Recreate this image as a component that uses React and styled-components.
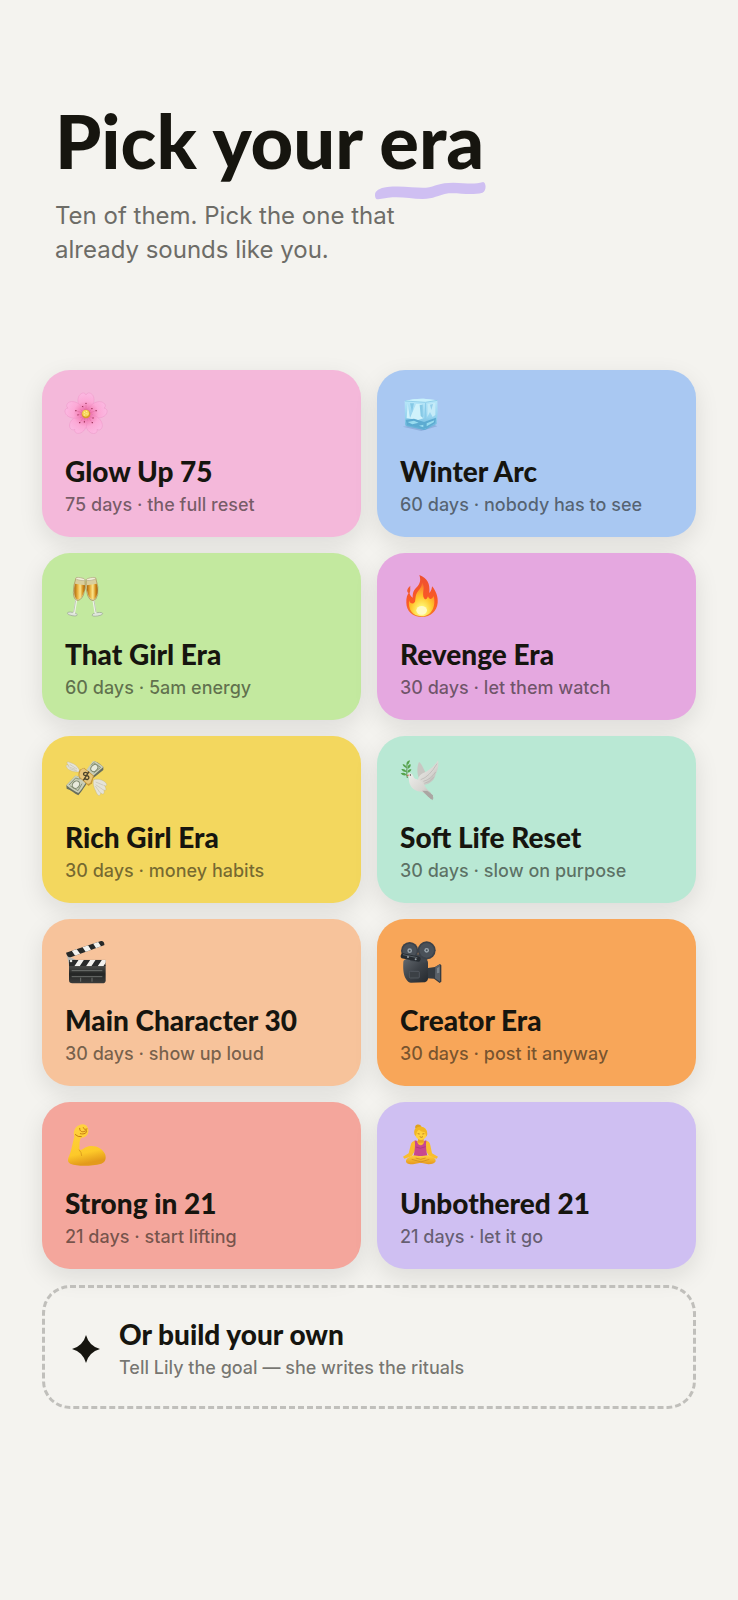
import React, { useState } from "react";
import styled, { createGlobalStyle } from "styled-components";

const GlobalStyle = createGlobalStyle`
	* {
		box-sizing: border-box;
	}

	body {
		margin: 0;
		background: #f4f3ef;
		color: #16150f;
		font-family: Inter, "Open Sans", sans-serif;
	}
`;

const Page = styled.main`
	min-height: 100vh;
	padding: 101px 42px 96px;
`;

const Header = styled.header`
	padding: 0 13px;
	margin-bottom: 103px;
`;

const Heading = styled.h1`
	margin: 0;
	font-family: Lato, sans-serif;
	font-size: 74px;
	font-weight: 900;
	line-height: 80px;
`;

const Underlined = styled.span`
	position: relative;
	display: inline-block;
`;

const Squiggle = styled.svg`
	position: absolute;
	left: -4px;
	bottom: -19px;
	width: calc(100% + 6px);
	height: 18px;
`;

const Intro = styled.p`
	max-width: 400px;
	margin: 18px 0 0;
	color: #6d6c67;
	font-size: 24px;
	line-height: 34px;
`;

const Grid = styled.section`
	display: grid;
	grid-template-columns: 1fr 1fr;
	gap: 16px;
`;

const Card = styled.button`
	display: flex;
	flex-direction: column;
	align-items: flex-start;
	padding: 22px 23px 20px;
	border: 0;
	border-radius: 28px;
	background: ${props => props.$color};
	box-shadow: 0 8px 24px rgba(22, 21, 15, 0.1);
	color: inherit;
	font-family: inherit;
	text-align: left;
	cursor: pointer;
`;

const Icon = styled.svg`
	width: 43px;
	height: 43px;
	margin-bottom: 20px;
	overflow: visible;
`;

const Title = styled.span`
	display: block;
	font-family: Lato, sans-serif;
	font-size: 28px;
	font-weight: 900;
	line-height: 32px;
`;

const Detail = styled.span`
	display: block;
	margin-top: 6px;
	color: rgba(22, 21, 15, 0.58);
	font-size: 18px;
	font-weight: 500;
	line-height: 24px;
`;

const CustomCard = styled.button`
	grid-column: 1 / -1;
	display: flex;
	align-items: center;
	gap: 19px;
	padding: 30px 27px 26px;
	border: 3px dashed #c0bfbb;
	border-radius: 28px;
	background: transparent;
	color: inherit;
	font-family: inherit;
	text-align: left;
	cursor: pointer;
`;

const Star = styled.svg`
	width: 28px;
	height: 28px;
	flex: none;
`;

const Blossom = () => (
	<>
		<defs>
			<radialGradient id="petal" cx="63" cy="66" r="64" gradientUnits="userSpaceOnUse">
				<stop offset="0" stopColor="#e0558f" />
				<stop offset="0.3" stopColor="#f483b8" />
				<stop offset="0.6" stopColor="#fca9d6" />
				<stop offset="1" stopColor="#fbb9e2" />
			</radialGradient>
		</defs>
		{[0, 72, 144, 216, 288].map(angle => (
			<g key={angle} transform={`rotate(${angle} 63 66)`}>
				<path
					d="M63 66C46 53 37 38 39 21C41 9 49 2 57 3Q61 4 63 9Q65 4 70 3C79 2 86 10 87 22C88 38 79 53 63 66Z"
					fill="url(#petal)"
					stroke="#ea8abf"
					strokeWidth="1"
				/>
				<path d="M63 60V38M63 60L55 47M63 60L71 47" stroke="#d95f98" strokeWidth="1" />
				<circle cx="63" cy="34" r="2" fill="#8d2447" />
				<circle cx="53" cy="44" r="2" fill="#8d2447" />
			</g>
		))}
		<circle cx="63" cy="66" r="13" fill="#d99b2b" />
		<circle cx="62" cy="64" r="10" fill="#f7d65b" />
		<path d="M57 61h3M63 58h3M62 65h3M57 69h3M67 66h3" stroke="#fff2a0" strokeWidth="3" />
	</>
);

const IceCube = () => (
	<>
		<defs>
			<linearGradient id="ice" x1="0" y1="0" x2="0" y2="1">
				<stop offset="0" stopColor="#bdeafa" />
				<stop offset="0.6" stopColor="#94d2ee" />
				<stop offset="1" stopColor="#5aaad2" />
			</linearGradient>
		</defs>
		<path d="M8 104L64 117L112 103L92 94Z" fill="#8fb0de" />
		<path d="M14 27Q42 19 70 20L112 25Q115 61 110 96L76 113L72 114L20 103Q15 101 15 95Z" fill="url(#ice)" />
		<path d="M14 27Q46 19 72 20L112 25L76 30Z" fill="#c9f1fb" />
		<path d="M15 27L76 31L112 25" fill="none" stroke="#7dc3e2" strokeWidth="2" />
		<path d="M77 33L75 111" stroke="#8accea" strokeWidth="3" />
		<path d="M23 35L30 78L48 36L65 36L70 79L54 84L20 78Z" fill="#d0f2fb" />
		<path d="M30 34L36 60L42 34ZM59 38L62 72L69 78L68 38Z" fill="#86c9e6" />
		<path d="M83 36L106 32L106 69L98 75L90 60L82 75Z" fill="#c5ebf8" />
		<path d="M90 38L99 36L94 54Z" fill="#94cfeb" />
		<path d="M17 83L42 80L72 90L108 77L106 93L75 110L21 100Z" fill="#5cabd1" />
		<path d="M23 90L42 86L56 92L37 97ZM80 94L103 85L101 91L80 103ZM57 101L70 98L70 106Z" fill="#98dcef" />
	</>
);

const Glasses = () => (
	<>
		<defs>
			<linearGradient id="wine" x1="0" y1="0" x2="1" y2="0">
				<stop offset="0" stopColor="#a96509" />
				<stop offset="0.3" stopColor="#e9ae3c" />
				<stop offset="0.55" stopColor="#fbe58c" />
				<stop offset="0.8" stopColor="#d58f1d" />
				<stop offset="1" stopColor="#9c5a08" />
			</linearGradient>
		</defs>
		<ellipse cx="22" cy="117" rx="15" ry="5" fill="#dfe6dc" stroke="#99a592" strokeWidth="2" transform="rotate(10 22 117)" />
		<path d="M34 72L27 116" stroke="#f1f4ec" strokeWidth="6" />
		<path d="M32 76L26 112" stroke="#a7b29d" strokeWidth="2" />
		<path d="M33 9L60 14Q64 39 55 61Q46 78 36 76Q26 73 25 53Q25 29 33 9Z" fill="#d9cf9e" stroke="#a68c56" strokeWidth="2" />
		<path d="M30 26L60 31Q61 46 53 60Q45 75 37 73Q29 71 28 53Q27 39 30 26Z" fill="url(#wine)" />
		<ellipse cx="46" cy="12" rx="14" ry="4" fill="#f0eed7" stroke="#b7ab8a" strokeWidth="2" transform="rotate(9 46 12)" />
		<ellipse cx="97" cy="118" rx="16" ry="5" fill="#dfe6dc" stroke="#99a592" strokeWidth="2" transform="rotate(-8 97 118)" />
		<path d="M85 73L92 116" stroke="#f1f4ec" strokeWidth="6" />
		<path d="M87 77L93 112" stroke="#a7b29d" strokeWidth="2" />
		<path d="M64 14L92 9Q102 36 98 59Q94 76 84 77Q74 77 68 62Q60 39 64 14Z" fill="#d9cf9e" stroke="#a68c56" strokeWidth="2" />
		<path d="M66 31L95 26Q101 47 95 62Q91 73 83 73Q75 72 70 61Q64 46 66 31Z" fill="url(#wine)" />
		<ellipse cx="78" cy="12" rx="14" ry="4" fill="#f0eed7" stroke="#b7ab8a" strokeWidth="2" transform="rotate(-9 78 12)" />
	</>
);

const Flame = () => (
	<>
		<defs>
			<linearGradient id="flame" x1="0" y1="0" x2="0" y2="1">
				<stop offset="0" stopColor="#ee5030" />
				<stop offset="0.65" stopColor="#fb5a25" />
				<stop offset="1" stopColor="#f67c24" />
			</linearGradient>
			<radialGradient id="glow" cx="0.5" cy="0.85" r="0.85">
				<stop offset="0" stopColor="#fffbc8" />
				<stop offset="0.2" stopColor="#fff06a" />
				<stop offset="0.5" stopColor="#ffc72d" />
				<stop offset="0.8" stopColor="#fd8c2c" />
				<stop offset="1" stopColor="#f65f2b" />
			</radialGradient>
		</defs>
		<path d="M58 0C81 9 91 25 88 54C94 48 96 40 96 34C107 46 115 66 113 83C111 108 91 126 66 126C38 126 19 108 19 83C18 68 22 58 28 51C29 60 33 65 38 68C38 51 42 45 50 37C61 26 63 14 58 0Z" fill="url(#flame)" />
		<path d="M31 32C30 43 33 50 27 55C19 50 20 42 31 32Z" fill="#f15b32" />
		<path d="M66 22C76 38 67 48 70 65C74 75 80 76 84 64C89 77 97 72 101 63C108 88 99 123 65 124C36 123 24 103 27 76C31 87 39 89 45 80C47 70 46 61 51 53C58 43 66 37 66 22Z" fill="url(#glow)" />
		<ellipse cx="65" cy="106" rx="16" ry="13" fill="#fffac4" />
	</>
);

const Money = () => (
	<>
		<path d="M40 42C30 42 10 39 4 26C1 21 7 19 12 23C3 15 5 10 12 12C20 16 36 18 44 38Z" fill="#e5e3d8" stroke="#b6aa7c" strokeWidth="1" />
		<path d="M8 25L31 34M14 19L36 33M14 32L36 39" stroke="#c3bfb1" strokeWidth="2" />
		<path d="M86 65C103 61 121 68 125 79C126 84 121 85 118 82C127 95 122 101 116 95C121 108 113 112 107 104C106 119 96 112 92 99C88 90 82 78 86 65Z" fill="#e5e3d8" stroke="#b6aa7c" strokeWidth="1" />
		<path d="M92 72L116 82M92 80L114 95M91 84L105 104" stroke="#c3bfb1" strokeWidth="2" />
		<path d="M4 82L32 53C48 66 61 39 86 12C91 7 103 16 115 27V36L84 61C64 70 56 96 40 112C28 106 18 96 5 92Z" fill="#686f5d" />
		<path d="M4 82L32 52C49 66 63 36 84 9C91 9 104 18 115 27L84 54C64 64 56 90 40 105C28 101 18 92 4 82Z" fill="#c9ceb9" />
		<path d="M12 81L32 60Q48 69 60 50M78 22L86 14L107 28L86 45M16 84L39 98L51 77" fill="none" stroke="#8a9578" strokeWidth="3" />
		<ellipse cx="33" cy="80" rx="10" ry="12" fill="#e8eadb" stroke="#7d886c" strokeWidth="3" transform="rotate(42 33 80)" />
		<ellipse cx="88" cy="30" rx="9" ry="12" fill="#e8eadb" stroke="#7d886c" strokeWidth="3" transform="rotate(42 88 30)" />
		<path d="M44 35L57 29L87 53L81 76L71 84L42 58Q38 48 44 35Z" fill="#c69639" />
		<path d="M47 36L56 31L84 54L76 75L69 78L44 57Q42 47 47 36Z" fill="#e8c77c" />
		<path d="M69 48C62 39 52 45 57 51C62 55 68 50 71 56C74 64 65 68 58 60M72 41L55 67" fill="none" stroke="#4b4229" strokeWidth="4" />
	</>
);

const Dove = () => (
	<>
		<defs>
			<linearGradient id="feather" x1="0" y1="0" x2="1" y2="1">
				<stop offset="0" stopColor="#eeeeeb" />
				<stop offset="0.6" stopColor="#d7d5d1" />
				<stop offset="1" stopColor="#a9a6a3" />
			</linearGradient>
		</defs>
		<path d="M57 60C50 44 51 26 57 12C65 17 69 30 76 42L80 65Z" fill="#c8c6c2" />
		<path d="M53 70C56 47 67 48 82 39C95 31 106 20 114 7C118 23 111 40 107 48C103 66 93 76 73 81Z" fill="url(#feather)" />
		<path d="M62 65Q88 57 111 17M70 70Q93 64 107 42M73 76Q90 73 101 57" fill="none" stroke="#b7b4b0" strokeWidth="2" />
		<path d="M22 49C27 42 38 46 40 55C42 65 52 62 67 73C76 83 77 93 91 103L101 121L93 124L80 111L66 101C45 101 29 88 27 69C27 61 29 57 22 54Z" fill="url(#feather)" />
		<path d="M67 98L82 99L99 112L98 127L83 115Z" fill="#aaa6a2" />
		<path d="M17 53L26 49L26 55Z" fill="#d5776a" />
		<circle cx="31" cy="51" r="2" fill="#35352f" />
		<path d="M22 60C19 49 21 37 21 20" fill="none" stroke="#55924b" strokeWidth="3" />
		<path d="M20 42Q8 43 4 33Q16 31 20 42ZM21 31Q9 27 8 18Q19 20 21 31ZM20 22Q17 9 30 7Q29 17 20 22ZM23 32Q22 20 32 19Q33 29 23 32ZM22 44Q24 32 34 34Q33 43 22 44ZM20 51Q7 55 2 46Q14 41 20 51Z" fill="#55a34c" />
	</>
);

const Clapper = () => (
	<>
		<defs>
			<clipPath id="clap-top"><path d="M3 35L108 0Q117 -1 119 12L17 49Q7 50 3 35Z" /></clipPath>
			<clipPath id="clap-bar"><path d="M12 56H122V76H12Z" /></clipPath>
			<linearGradient id="slate" x1="0" y1="0" x2="0" y2="1">
				<stop offset="0" stopColor="#50514f" />
				<stop offset="0.5" stopColor="#242625" />
				<stop offset="1" stopColor="#3b3c3b" />
			</linearGradient>
		</defs>
		<path d="M5 40L14 48L34 57L30 71L12 72Z" fill="#b9bab6" />
		<g clipPath="url(#clap-top)">
			<path d="M0 -4H130V60H0Z" fill="#272929" />
			<path d="M17 25L32 20L51 46L35 51ZM48 12L65 6L82 33L66 38ZM80 1L95 -4L112 22L98 29Z" fill="#f2f1ed" />
		</g>
		<path d="M12 71H122V119Q121 127 112 127H22Q12 127 12 117Z" fill="url(#slate)" />
		<g clipPath="url(#clap-bar)">
			<path d="M10 56H122V76H10Z" fill="#292b2b" />
			<path d="M28 76L41 56H57L44 76ZM63 76L76 56H92L79 76ZM98 76L111 56H128L115 76Z" fill="#f2f1ed" />
		</g>
		<circle cx="18" cy="60" r="4" fill="#e2e4df" />
		<path d="M20 89H112M20 107H112M47 110V122M81 110V122" stroke="#8d908d" strokeWidth="2" />
	</>
);

const MovieCamera = () => (
	<>
		<defs>
			<linearGradient id="body" x1="0" y1="0" x2="1" y2="1">
				<stop offset="0" stopColor="#62686e" />
				<stop offset="0.5" stopColor="#3d4248" />
				<stop offset="1" stopColor="#24292e" />
			</linearGradient>
		</defs>
		<path d="M79 82L105 78L120 69L124 73V122L119 126L102 113L80 112Z" fill="#353b41" />
		<path d="M106 77L120 70V122L105 112Z" fill="#596068" />
		<path d="M111 82L118 77V95L111 97Z" fill="#7c858c" />
		<path d="M10 62Q11 54 25 53L75 54Q84 56 84 66V114Q82 123 75 124L33 125Q24 125 18 114C9 100 9 79 10 62Z" fill="url(#body)" />
		<rect x="28" y="91" width="30" height="20" rx="3" fill="#3b4045" stroke="#5d646b" strokeWidth="2" />
		<path d="M28 40H82V55L75 65L31 60Z" fill="#41474e" />
		<circle cx="29" cy="29" r="26" fill="#3c424a" />
		<circle cx="80" cy="28" r="27" fill="#3c424a" />
		<circle cx="29" cy="29" r="21" fill="#4a5159" />
		<circle cx="80" cy="28" r="22" fill="#4a5159" />
		<circle cx="29" cy="29" r="7" fill="#9ba5ac" />
		<circle cx="80" cy="28" r="7" fill="#9ba5ac" />
		<circle cx="29" cy="29" r="3" fill="#474e55" />
		<circle cx="80" cy="28" r="3" fill="#474e55" />
		<path d="M10 45L54 54" stroke="#272c31" strokeWidth="16" strokeLinecap="round" />
		<path d="M9 41L52 50" stroke="#767f86" strokeWidth="2" />
		<circle cx="24" cy="48" r="3" fill="#99a2a8" />
		<circle cx="47" cy="55" r="3" fill="#99a2a8" />
	</>
);

const Muscle = () => (
	<>
		<defs>
			<linearGradient id="skin" x1="0" y1="0" x2="0.2" y2="1">
				<stop offset="0" stopColor="#ffd343" />
				<stop offset="0.75" stopColor="#fdc929" />
				<stop offset="1" stopColor="#e39a1b" />
			</linearGradient>
		</defs>
		<path d="M28 38C23 24 30 8 42 4C50 -1 63 -1 67 9C76 24 66 42 48 41C42 51 44 64 43 76C50 83 55 70 71 67C92 63 112 73 120 90C125 103 121 115 109 119C76 127 38 127 16 119C7 115 8 106 12 97C21 75 22 58 28 38Z" fill="url(#skin)" />
		<path d="M44 13C43 23 54 27 64 19C67 27 57 32 46 29M55 11Q57 19 66 15M31 32Q39 40 49 38" fill="none" stroke="#c77e12" strokeWidth="3" strokeLinecap="round" />
		<path d="M42 77Q50 85 50 96" fill="none" stroke="#dfa01e" strokeWidth="3" />
	</>
);

const Yoga = () => (
	<>
		<defs>
			<linearGradient id="legs" x1="0" y1="0" x2="0" y2="1">
				<stop offset="0" stopColor="#ffd23c" />
				<stop offset="1" stopColor="#e6981f" />
			</linearGradient>
		</defs>
		<path d="M46 50H78Q89 51 91 64L96 88L114 98L110 104L88 98L76 77H47L35 97L13 104L9 98L26 88L32 64Q34 51 46 50Z" fill="#f9be2e" />
		<path d="M54 40H71V56H54Z" fill="#e9a422" />
		<path d="M44 49Q47 68 41 96H82Q76 69 79 49L73 51Q70 64 62 64Q54 64 51 51Z" fill="#c8488f" />
		<path d="M47 69Q61 77 77 68" fill="none" stroke="#a7307a" strokeWidth="2" />
		<path d="M40 94Q61 99 83 94C99 98 108 104 107 112Q103 121 85 121L62 116L39 121Q20 121 18 113C17 105 27 98 40 94Z" fill="url(#legs)" />
		<path d="M35 106L64 114M88 106L62 114M47 102Q62 110 77 102" fill="none" stroke="#c98420" strokeWidth="2" />
		<path d="M46 13C43 3 53 -1 61 3L66 11L50 15Z" fill="#dfa11c" />
		<ellipse cx="63" cy="28" rx="18" ry="20" fill="#ffd13c" />
		<path d="M44 33C40 19 45 12 54 9C67 5 82 12 82 31L79 38L75 25Q63 23 57 17Q50 20 48 36Z" fill="#f1b624" />
		<path d="M53 29L59 30M67 30L73 29M59 38Q64 42 69 38" fill="none" stroke="#a55e18" strokeWidth="2" />
	</>
);

const eras = [
	{ title: "Glow Up 75", detail: "75 days · the full reset", color: "#f4b8da", Art: Blossom },
	{ title: "Winter Arc", detail: "60 days · nobody has to see", color: "#a9c8f2", Art: IceCube },
	{ title: "That Girl Era", detail: "60 days · 5am energy", color: "#c3e99f", Art: Glasses },
	{ title: "Revenge Era", detail: "30 days · let them watch", color: "#e5a8e0", Art: Flame },
	{ title: "Rich Girl Era", detail: "30 days · money habits", color: "#f3d75e", Art: Money },
	{ title: "Soft Life Reset", detail: "30 days · slow on purpose", color: "#b9e8d4", Art: Dove },
	{ title: "Main Character 30", detail: "30 days · show up loud", color: "#f7c39b", Art: Clapper },
	{ title: "Creator Era", detail: "30 days · post it anyway", color: "#f8a659", Art: MovieCamera },
	{ title: "Strong in 21", detail: "21 days · start lifting", color: "#f4a69c", Art: Muscle },
	{ title: "Unbothered 21", detail: "21 days · let it go", color: "#cfbff2", Art: Yoga }
];

const App = () => {
	const [selected, setSelected] = useState(null);

	return (
		<>
			<GlobalStyle />
			<Page>
				<Header>
					<Heading>
						Pick your{" "}
						<Underlined>
							era
							<Squiggle viewBox="0 0 344 54" preserveAspectRatio="none" aria-hidden="true">
								<path
									d="M0 38C0 27 13 18 38 15C88 10 128 19 158 17C188 13 198 2 243 2C278 2 303 9 335 0C344 0 347 26 333 32C298 41 263 32 228 34C193 40 183 51 148 51C98 49 68 39 10 52C2 53 0 45 0 38Z"
									fill="#cfbff2"
								/>
							</Squiggle>
						</Underlined>
					</Heading>
					<Intro>
						Ten of them. Pick the one that
						<br />
						already sounds like you.
					</Intro>
				</Header>

				<Grid>
					{eras.map(({ title, detail, color, Art }) => (
						<Card
							key={title}
							type="button"
							$color={color}
							aria-pressed={selected === title}
							onClick={() => setSelected(title)}
						>
							<Icon viewBox="0 0 129 129" fill="none" aria-hidden="true">
								<Art />
							</Icon>
							<Title>{title}</Title>
							<Detail>{detail}</Detail>
						</Card>
					))}

					<CustomCard type="button" onClick={() => setSelected("custom")}>
						<Star viewBox="0 0 28 28" aria-hidden="true">
							<path d="M14 0Q17 11 28 14Q17 17 14 28Q11 17 0 14Q11 11 14 0Z" fill="#16150f" />
						</Star>
						<span>
							<Title>Or build your own</Title>
							<Detail>Tell Lily the goal — she writes the rituals</Detail>
						</span>
					</CustomCard>
				</Grid>
			</Page>
		</>
	);
};

export default App;
